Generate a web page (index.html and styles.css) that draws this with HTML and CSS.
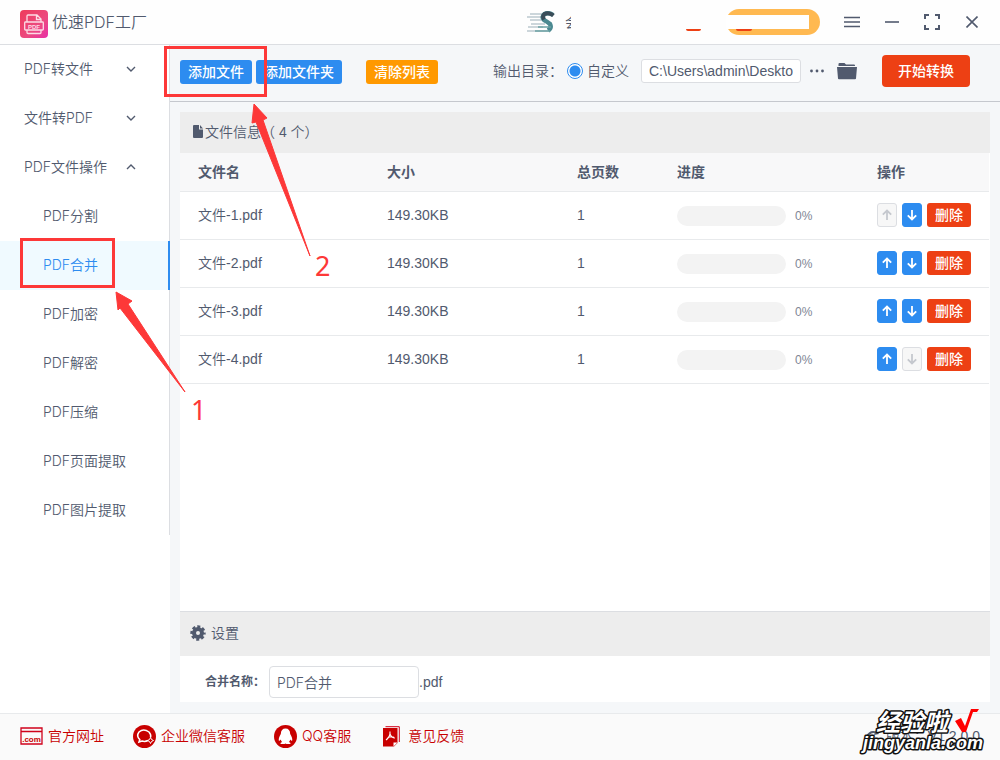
FILE: index.html
```html
<!DOCTYPE html>
<html lang="zh-CN">
<head>
<meta charset="utf-8">
<title>优速PDF工厂</title>
<link rel="stylesheet" href="styles.css">
</head>
<body>
<svg class="defs" width="0" height="0" aria-hidden="true">
  <symbol id="up" viewBox="0 0 12 12"><path d="M6 11V2M1.800 5.700 6 1.500l4.200 4.200" fill="none" stroke="currentColor" stroke-width="1.800"/></symbol>
  <symbol id="down" viewBox="0 0 12 12"><path d="M6 1v9M1.800 6.300 6 10.500l4.200-4.200" fill="none" stroke="currentColor" stroke-width="1.800"/></symbol>
  <symbol id="chevron" viewBox="0 0 10 6"><path d="M1 1l4 4 4-4" fill="none" stroke="currentColor" stroke-width="1.400"/></symbol>
</svg>

<header class="titlebar">
  <svg class="logo" viewBox="0 0 28 28" aria-hidden="true">
    <defs><linearGradient id="lg" x1="0" y1="0" x2="1" y2="1"><stop offset="0" stop-color="#ee3a5a"/><stop offset=".6" stop-color="#ec4a80"/><stop offset="1" stop-color="#e82fa8"/></linearGradient></defs>
    <rect width="28" height="28" rx="4" fill="url(#lg)"/>
    <path d="M7 12V6q0-1 1-1h9l4 4v3M16.500 5v4.500H21M5.500 12h17q.8 0 .8.8v6.400q0 .8-.8.8h-17q-.8 0-.8-.8v-6.400q0-.8.8-.8zM7 20v2.500q0 1 1 1h12q1 0 1-1V20" fill="none" stroke="#fcdbe5" stroke-width="1.300"/>
    <text x="14" y="18.500" text-anchor="middle" class="logo-text">PDF</text>
  </svg>
  <h1 class="app-name">优速PDF工厂</h1>
  <div class="account">
    <svg class="avatar" viewBox="0 0 28 22" aria-hidden="true">
      <path d="M3 3h14M0 6h14M3 9h13M4 13h14M1 16h15M0 20h21" stroke="#bcc9cf" stroke-width="1.300"/>
      <path d="M26 4Q22 1 17.500 3 14 6 17 9q3 1.500 6 4 2 4-2 6.500" fill="none" stroke="#4b8991" stroke-width="4.500"/>
      <path d="M26.500 4.500Q22 1 17.500 3 15 5 17 8.500" fill="none" stroke="#394c58" stroke-width="4"/>
      <path d="M8 20h15M11 16h13" stroke="#6ba1a4" stroke-width="1.500"/>
    </svg>
    <span class="user">会</span>
    <span class="sliver"></span>
    <span class="pill"><span class="pill-mask"></span><span class="pill-mark"></span></span>
  </div>
  <nav class="window-buttons" aria-label="窗口">
    <button class="icon-button" aria-label="菜单"><svg width="16" height="12" viewBox="0 0 16 12"><path d="M0 1.500h16M0 6h16M0 10.500h16" stroke="currentColor" stroke-width="1.500"/></svg></button>
    <button class="icon-button" aria-label="最小化"><svg width="14" height="12" viewBox="0 0 14 12"><path d="M0 6h14" stroke="currentColor" stroke-width="1.600"/></svg></button>
    <button class="icon-button" aria-label="最大化"><svg width="16" height="16" viewBox="0 0 16 16"><path d="M1 5V1h4M11 1h4v4M15 11v4h-4M5 15H1v-4" fill="none" stroke="currentColor" stroke-width="2"/></svg></button>
    <button class="icon-button" aria-label="关闭"><svg width="12" height="12" viewBox="0 0 12 12"><path d="M.5.500l11 11M11.500.500l-11 11" stroke="currentColor" stroke-width="1.600"/></svg></button>
  </nav>
</header>

<div class="body">
  <aside class="sidebar">
    <nav class="menu">
      <a class="group" href="#">PDF转文件<svg class="chev" width="10" height="6"><use href="#chevron"/></svg></a>
      <a class="group" href="#">文件转PDF<svg class="chev" width="10" height="6"><use href="#chevron"/></svg></a>
      <a class="group" href="#">PDF文件操作<svg class="chev open" width="10" height="6"><use href="#chevron"/></svg></a>
      <a class="item" href="#">PDF分割</a>
      <a class="item active" href="#">PDF合并</a>
      <a class="item" href="#">PDF加密</a>
      <a class="item" href="#">PDF解密</a>
      <a class="item" href="#">PDF压缩</a>
      <a class="item" href="#">PDF页面提取</a>
      <a class="item" href="#">PDF图片提取</a>
    </nav>
  </aside>

  <main class="main">
    <div class="toolbar">
      <button class="btn primary">添加文件</button>
      <button class="btn primary">添加文件夹</button>
      <button class="btn warning">清除列表</button>
      <div class="output">
        <span>输出目录：</span>
        <label class="radio"><input type="radio" name="dir" checked>自定义</label>
        <input class="path" type="text" value="C:\Users\admin\Deskto" aria-label="输出目录">
        <button class="icon-button" aria-label="更多"><svg width="14" height="4" viewBox="0 0 14 4"><g fill="currentColor"><circle cx="1.500" cy="2" r="1.400"/><circle cx="7" cy="2" r="1.400"/><circle cx="12.500" cy="2" r="1.400"/></g></svg></button>
        <button class="icon-button folder" aria-label="打开文件夹"><svg width="20" height="18" viewBox="0 0 20 18"><path d="M1.500 4V2q0-1 1-1h5l1.500 1.500h8q1 0 1 1V4zM0 5h20l-1 11.500q0 .8-1 .8H2q-1 0-1-.8z" fill="currentColor"/></svg></button>
        <button class="start">开始转换</button>
      </div>
    </div>

    <section class="panel">
      <h2 class="panel-title files"><svg width="10" height="13" viewBox="0 0 10 13" aria-hidden="true"><path d="M1 0h5v4.500h4V12q0 1-1 1H1q-1 0-1-1V1q0-1 1-1zM7 0l3 3.500H7z" fill="currentColor"/></svg>文件信息（ 4 个）</h2>
      <div class="list">
        <table class="table">
          <colgroup><col class="c-name"><col class="c-size"><col class="c-pages"><col class="c-progress"><col class="c-actions"></colgroup>
          <thead><tr><th>文件名</th><th>大小</th><th>总页数</th><th>进度</th><th>操作</th></tr></thead>
          <tbody>
            <tr><td>文件-1.pdf</td><td>149.30KB</td><td>1</td><td><div class="progress"><span class="track"></span><span>0%</span></div></td><td><div class="actions"><button class="move" disabled aria-label="上移"><svg width="12" height="12"><use href="#up"/></svg></button><button class="move" aria-label="下移"><svg width="12" height="12"><use href="#down"/></svg></button><button class="btn danger">删除</button></div></td></tr>
            <tr><td>文件-2.pdf</td><td>149.30KB</td><td>1</td><td><div class="progress"><span class="track"></span><span>0%</span></div></td><td><div class="actions"><button class="move" aria-label="上移"><svg width="12" height="12"><use href="#up"/></svg></button><button class="move" aria-label="下移"><svg width="12" height="12"><use href="#down"/></svg></button><button class="btn danger">删除</button></div></td></tr>
            <tr><td>文件-3.pdf</td><td>149.30KB</td><td>1</td><td><div class="progress"><span class="track"></span><span>0%</span></div></td><td><div class="actions"><button class="move" aria-label="上移"><svg width="12" height="12"><use href="#up"/></svg></button><button class="move" aria-label="下移"><svg width="12" height="12"><use href="#down"/></svg></button><button class="btn danger">删除</button></div></td></tr>
            <tr><td>文件-4.pdf</td><td>149.30KB</td><td>1</td><td><div class="progress"><span class="track"></span><span>0%</span></div></td><td><div class="actions"><button class="move" aria-label="上移"><svg width="12" height="12"><use href="#up"/></svg></button><button class="move" disabled aria-label="下移"><svg width="12" height="12"><use href="#down"/></svg></button><button class="btn danger">删除</button></div></td></tr>
          </tbody>
        </table>
      </div>
      <h2 class="panel-title settings"><svg width="16" height="16" viewBox="0 0 16 16" aria-hidden="true"><circle cx="8" cy="8" r="4" fill="none" stroke="currentColor" stroke-width="4"/><circle cx="8" cy="8" r="6.200" fill="none" stroke="currentColor" stroke-width="3" stroke-dasharray="2.900 1.970" stroke-dashoffset="1.450"/></svg>设置</h2>
      <div class="form">
        <label class="form-label" for="merge">合并名称：</label>
        <input class="name" id="merge" type="text" value="PDF合并">
        <span>.pdf</span>
      </div>
    </section>
  </main>
</div>

<footer class="footer">
  <a class="link" href="#"><svg width="23" height="18" viewBox="0 0 23 18" aria-hidden="true"><path d="M1 1h21v16H1zM1 4.500h21" fill="none" stroke="#d0021b" stroke-width="1.300"/><text x="11.500" y="14.500" text-anchor="middle" class="com">.com</text></svg>官方网址</a>
  <a class="link" href="#"><svg width="23" height="23" viewBox="0 0 23 23" aria-hidden="true"><circle cx="11.500" cy="11.500" r="11.500" fill="#c80000"/><path d="M15 15.500q-3 1.500-6 .5l-3 1 .8-2.400Q3 11 6 7q4.500-4 10 0 2.500 3 1.500 5.500" fill="none" stroke="#fff" stroke-width="1.500"/><path d="M17.500 12.500l1 2 2 1-2 1-1 2-1-2-2-1 2-1z" fill="none" stroke="#fff"/></svg>企业微信客服</a>
  <a class="link" href="#"><svg width="23" height="23" viewBox="0 0 23 23" aria-hidden="true"><circle cx="11.500" cy="11.500" r="11.500" fill="#c80000"/><path d="M11.500 3.500Q7 3.500 6.800 9q-2.500 4-2 6.500.5 1 2-1 .3 1.500 1.300 2.500-2 .5-1.600 2h4l1-.6 1 .6h4q.4-1.500-1.600-2 1-1 1.300-2.500 1.500 2 2 1 .5-2.500-2-6.500Q16 3.500 11.500 3.500z" fill="#fff"/></svg>QQ客服</a>
  <a class="link feedback" href="#"><svg width="17" height="21" viewBox="0 0 17 21" aria-hidden="true"><path d="M2.500.7h13.800V16" fill="none" stroke="#d0021b"/><path d="M0 2h14.500v15L11 20.500H0z" fill="#c80000"/><path d="M10.500 20.500v-4h4z" fill="#fff"/><path d="M7 5.500q.5 5-4 8.500M7 8q1.500 4 5 4M4.500 12q3-2 6.500-.8" fill="none" stroke="#fff" stroke-width="1.100"/></svg>意见反馈</a>
  <span class="version"><svg width="14" height="14" viewBox="0 0 14 14" aria-hidden="true"><path d="M1 8q3-7 10-4" fill="none" stroke="currentColor" stroke-width="2"/><path d="M10 1l3 4-5 1z" fill="currentColor"/></svg>版本：V1.2.0.0</span>
</footer>

<svg class="notes" width="1000" height="759" viewBox="0 0 1000 759" aria-hidden="true">
  <g fill="none" stroke="#fd3838" stroke-width="3"><path d="M165.500 47.500h100v48h-100zM21.500 239.500h92v47h-92z"/></g>
  <g fill="#fd3838">
    <path d="M254 104l13 14-4 2 47 136-54-134-4 1z" stroke="#fd3838"/>
    <path d="M116 292l16 9-4 3 57 88-65-84-2 2z" stroke="#fd3838"/>
    <text class="digit" x="315" y="276">2</text>
    <text class="digit" x="191" y="420">1</text>
  </g>
  <text class="mark cn" x="876" y="731">经验啦</text>
  <path d="M955 721l6-3 4 8 6-17h8l-2 3h-4l-7 20h-4z" fill="#f00"/>
  <text class="mark en" x="863" y="749">jingyanla.com</text>
</svg>
</body>
</html>
```
FILE: styles.css
```css
* { box-sizing: border-box; }
body {
  margin: 0;
  min-height: 100vh;
  display: flex;
  flex-direction: column;
  position: relative;
  background: #fff;
  color: #515a6e;
  font: 350 14px/20px "Liberation Sans", "Noto Sans CJK SC", sans-serif;
}
a { color: inherit; text-decoration: none; }
button, input { font: inherit; color: inherit; margin: 0; }
svg { display: block; flex: none; }
.defs { position: absolute; }

.titlebar {
  height: 45px;
  display: flex;
  align-items: center;
  padding: 0 20px;
  border-bottom: 1px solid #dcdee2;
  background: #fefefe;
}
.logo { width: 28px; height: 28px; margin-top: 3px; }
.logo-text { font: bold 6px "Liberation Sans", sans-serif; fill: #fcdbe5; }
.app-name { margin: 0 0 0 4px; font-size: 16px; }
.app-name, .menu, .name, .link { font-family: Inter, "Noto Sans CJK SC", sans-serif; font-weight: 350; }
.account { display: flex; align-items: center; margin-left: auto; }
.avatar { width: 28px; height: 22px; margin-right: 10px; }
.user { width: 6px; overflow: hidden; }
.sliver { width: 15px; height: 2px; margin: 16px 25px 0 115px; background: #ed4014; border-radius: 0 0 5px 5px; }
.pill { position: relative; width: 94px; height: 26px; border-radius: 13px; background: #ffb951; }
.pill-mask { position: absolute; left: 0; top: 6px; width: 83px; height: 14px; background: #fff; }
.pill-mark { position: absolute; left: 10px; top: 20px; width: 16px; height: 2px; background: #ed4014; border-radius: 0 0 5px 5px; }
.window-buttons { display: flex; gap: 16px; margin-left: 20px; margin-right: -4px; }
.icon-button {
  display: flex;
  align-items: center;
  justify-content: center;
  width: 24px;
  height: 24px;
  padding: 0;
  border: 0;
  background: none;
}

.body { flex: 1; display: flex; }
.sidebar { flex: none; width: 170px; background: #fff; }
.menu { border-right: 1px solid #dcdee2; }
.group, .item { display: flex; align-items: center; height: 49px; padding: 0 0 2px 24px; }
.group { justify-content: space-between; padding-right: 33px; }
.item { padding-left: 43px; }
.active { margin-right: -1px; border-right: 2px solid #2d8cf0; background: #f0faff; color: #2d8cf0; }
.open { transform: rotate(180deg); }

.main { flex: 1; min-width: 0; display: flex; flex-direction: column; background: #f5f7f9; }
.toolbar {
  height: 57px;
  display: flex;
  align-items: center;
  padding: 0 30px 2px 10px;
  border-bottom: 1px solid #c5c8ce;
}
.btn {
  height: 24px;
  padding: 0 8px;
  border: 0;
  border-radius: 3px;
  color: #fff;
  font-weight: 500;
  white-space: nowrap;
}
.primary { background: #2d8cf0; margin-right: 4px; }
.warning { background: #f90; margin-left: 20px; }
.danger { background: #ed4014; }
.output { display: flex; align-items: center; margin: 0 0 2px auto; white-space: nowrap; }
.radio { display: flex; align-items: center; gap: 4px; margin-left: 4px; }
.radio input {
  appearance: none;
  width: 16px;
  height: 16px;
  border: 1px solid #2d8cf0;
  border-radius: 50%;
  background: radial-gradient(circle, #2d8cf0 5px, #fff 6px);
}
.path { width: 160px; height: 24px; margin: 0 4px 0 12px; padding: 0 7px; border: 1px solid #dcdee2; border-radius: 3px; background: #fff; }
.folder { margin: 0 23px 0 6px; }
.start { width: 88px; height: 32px; padding: 0; border: 0; border-radius: 4px; background: #ed4014; color: #fff; font-weight: 500; }

.panel { flex: 1; display: flex; flex-direction: column; margin: 10px 10px 11px; background: #fff; }
.panel-title { display: flex; align-items: center; margin: 0; padding-bottom: 2px; background: #ededed; font-size: 14px; font-weight: 350; }
.files { height: 41px; padding-left: 13px; gap: 2px; }
.settings { height: 45px; padding-left: 10px; gap: 5px; border-top: 1px solid #dcdee2; }
.list { flex: 1; padding-right: 1px; }
.table { width: 100%; table-layout: fixed; border-collapse: separate; border-spacing: 0; }
.c-name, .c-size { width: 190px; }
.c-pages { width: 100px; }
.c-progress { width: 200px; }
th, td { padding: 0 0 0 17px; border-bottom: 1px solid #e8eaec; text-align: left; }
th:first-child, td:first-child { padding-left: 18px; }
th { height: 39px; background: #f8f8f9; font-weight: 700; }
td { height: 48px; padding-bottom: 2px; }
.progress { display: flex; align-items: center; gap: 9px; margin-top: 2px; font-size: 12px; color: #808695; }
.track { width: 109px; height: 20px; border-radius: 10px; background: #f3f3f3; }
.actions { display: flex; gap: 5px; }
.move {
  display: flex;
  align-items: center;
  justify-content: center;
  width: 20px;
  height: 24px;
  padding: 0;
  border: 1px solid #2d8cf0;
  border-radius: 3px;
  background: #2d8cf0;
  color: #fff;
}
.move:disabled { border-color: #dcdee2; background: #f7f7f7; color: #c5c8ce; }
.form { height: 46px; display: flex; align-items: center; padding: 6px 0 0 25px; }
.form-label { width: 64px; font-size: 12px; font-weight: 700; white-space: nowrap; }
.name { width: 150px; height: 32px; padding: 0 7px; border: 1px solid #dcdee2; border-radius: 4px; background: #fff; }

.footer {
  height: 47px;
  display: flex;
  align-items: center;
  gap: 29px;
  padding: 0 20px 2px;
  border-top: 1px solid #e8eaec;
  background: #fafafa;
}
.link { display: flex; align-items: center; gap: 5px; color: #c80000; }
.feedback { gap: 8px; margin-left: 3px; }
.com { font: bold 8px "Liberation Sans", sans-serif; fill: #c80000; }
.version { display: flex; align-items: center; gap: 6px; margin-left: auto; }

.notes { position: absolute; left: 0; top: 0; pointer-events: none; }
.digit { font: 400 27px "Noto Sans", sans-serif; }
.mark { fill: #fff; stroke: #111; stroke-width: 3px; paint-order: stroke; stroke-linejoin: round; }
.cn { font: italic bold 24px "Noto Sans CJK SC", sans-serif; }
.en { font: italic bold 18px "Liberation Sans", sans-serif; }
```
